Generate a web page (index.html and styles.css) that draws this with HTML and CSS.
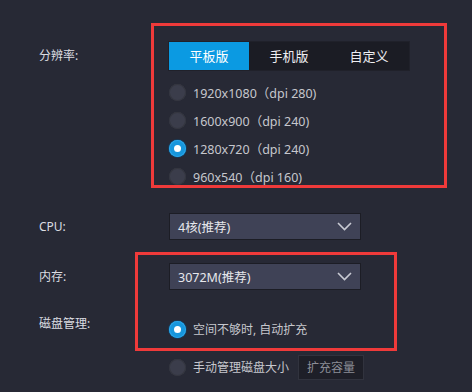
FILE: index.html
```html
<!DOCTYPE html>
<html lang="zh-CN">
<head>
<meta charset="utf-8">
<title>设置</title>
<link rel="stylesheet" href="styles.css">
</head>
<body>
<div class="page">
  <div class="row row-res">
    <div class="label label-tab">分辨率:</div>
    <div class="control">
      <div class="tabs">
        <div class="tab active">平板版</div>
        <div class="tab">手机版</div>
        <div class="tab">自定义</div>
      </div>
      <div class="options">
        <div class="option"><span class="radio"></span><span class="opt-text num">1920x1080（dpi 280)</span></div>
        <div class="option"><span class="radio"></span><span class="opt-text num">1600x900（dpi 240)</span></div>
        <div class="option"><span class="radio checked"></span><span class="opt-text num">1280x720（dpi 240)</span></div>
        <div class="option"><span class="radio"></span><span class="opt-text num">960x540（dpi 160)</span></div>
      </div>
    </div>
  </div>

  <div class="row row-cpu">
    <div class="label label-select">CPU:</div>
    <div class="control">
      <div class="select"><span>4核(推荐)</span>
        <svg class="chev" width="15" height="9" viewBox="0 0 15 9"><path d="M1 1 L7.5 7.5 L14 1" fill="none" stroke="#c9cbd4" stroke-width="1.6"/></svg>
      </div>
    </div>
  </div>

  <div class="row row-mem">
    <div class="label label-select">内存:</div>
    <div class="control">
      <div class="select"><span>3072M(推荐)</span>
        <svg class="chev" width="15" height="9" viewBox="0 0 15 9"><path d="M1 1 L7.5 7.5 L14 1" fill="none" stroke="#c9cbd4" stroke-width="1.6"/></svg>
      </div>
    </div>
  </div>

  <div class="row row-disk">
    <div class="label label-disk">磁盘管理:</div>
    <div class="control">
      <div class="option option-auto"><span class="radio checked"></span><span class="opt-text">空间不够时, 自动扩充</span></div>
      <div class="option option-manual"><span class="radio"></span><span class="opt-text">手动管理磁盘大小</span><span class="btn">扩充容量</span></div>
    </div>
  </div>

  <div class="mark mark-res"></div>
  <div class="mark mark-mem"></div>
</div>
</body>
</html>
```

FILE: styles.css
```css
html, body {
  margin: 0;
  padding: 0;
  background: #272935;
}

.page {
  position: relative;
  width: 472px;
  height: 392px;
  box-sizing: border-box;
  padding: 42px 0 0 39px;
  font-family: "Noto Sans", "Noto Sans CJK SC", sans-serif;
  font-size: 12px;
  color: #d6d7dc;
  overflow: hidden;
}

.row {
  display: grid;
  grid-template-columns: 130px 1fr;
  align-items: start;
}

.row-cpu { margin-top: 23px; }
.row-mem { margin-top: 23px; }
.row-disk { margin-top: 24px; }

.label {
  color: #dcdde2;
  white-space: nowrap;
}
.label-tab { line-height: 28px; }
.label-select { line-height: 27px; }
.label-disk { line-height: 20px; }

.control {
  display: flex;
  flex-direction: column;
}

.tabs {
  display: flex;
  width: 240px;
  height: 28px;
  background: #1b1c24;
  box-shadow: 0 0 0 1px #20212a;
}

.tab {
  width: 80px;
  line-height: 28px;
  text-align: center;
  color: #eeeef2;
  font-size: 13px;
}

.tab.active {
  background: #0b9ae2;
  color: #ffffff;
}

.options {
  margin-top: 8px;
  display: flex;
  flex-direction: column;
}

.option {
  display: flex;
  align-items: center;
  height: 28px;
}

.radio {
  width: 17px;
  height: 17px;
  border-radius: 50%;
  background: #3b3d4b;
  box-shadow: inset 0 0 0 1px #34363f;
  box-sizing: border-box;
  position: relative;
  flex: none;
}

.radio.checked {
  background: #1796dc;
  box-shadow: 0 0 0 1px #193a57, inset 0 0 0 1px #2aa6ea;
}

.radio.checked::after {
  content: "";
  position: absolute;
  left: 5px;
  top: 5px;
  width: 7px;
  height: 7px;
  border-radius: 50%;
  background: #ffffff;
}

.opt-text {
  margin-left: 7px;
  color: #c6c7cd;
  font-size: 12px;
  white-space: nowrap;
}

.opt-text.num { font-size: 12.5px; }

.select {
  width: 192px;
  height: 27px;
  box-sizing: border-box;
  background: #3f4256;
  border: 1px solid #1c1d25;
  display: flex;
  align-items: center;
  justify-content: space-between;
  padding: 0 8px 0 8px;
  color: #e6e7ec;
  font-size: 12.5px;
}

.chev { display: block; }

.option-auto { margin-top: 1px; }
.option-manual { margin-top: 10px; }

.btn {
  margin-left: 9px;
  height: 25px;
  line-height: 23px;
  box-sizing: border-box;
  padding: 0 8px;
  background: #1e1f28;
  border: 1px solid #31333e;
  color: #8c8e97;
  font-size: 12px;
}

.mark {
  position: absolute;
  border: 3px solid #ef3a3a;
  box-sizing: border-box;
  pointer-events: none;
}

.mark-res {
  left: 151px;
  top: 23px;
  width: 296px;
  height: 165px;
}

.mark-mem {
  left: 135px;
  top: 252px;
  width: 262px;
  height: 99px;
}
```
